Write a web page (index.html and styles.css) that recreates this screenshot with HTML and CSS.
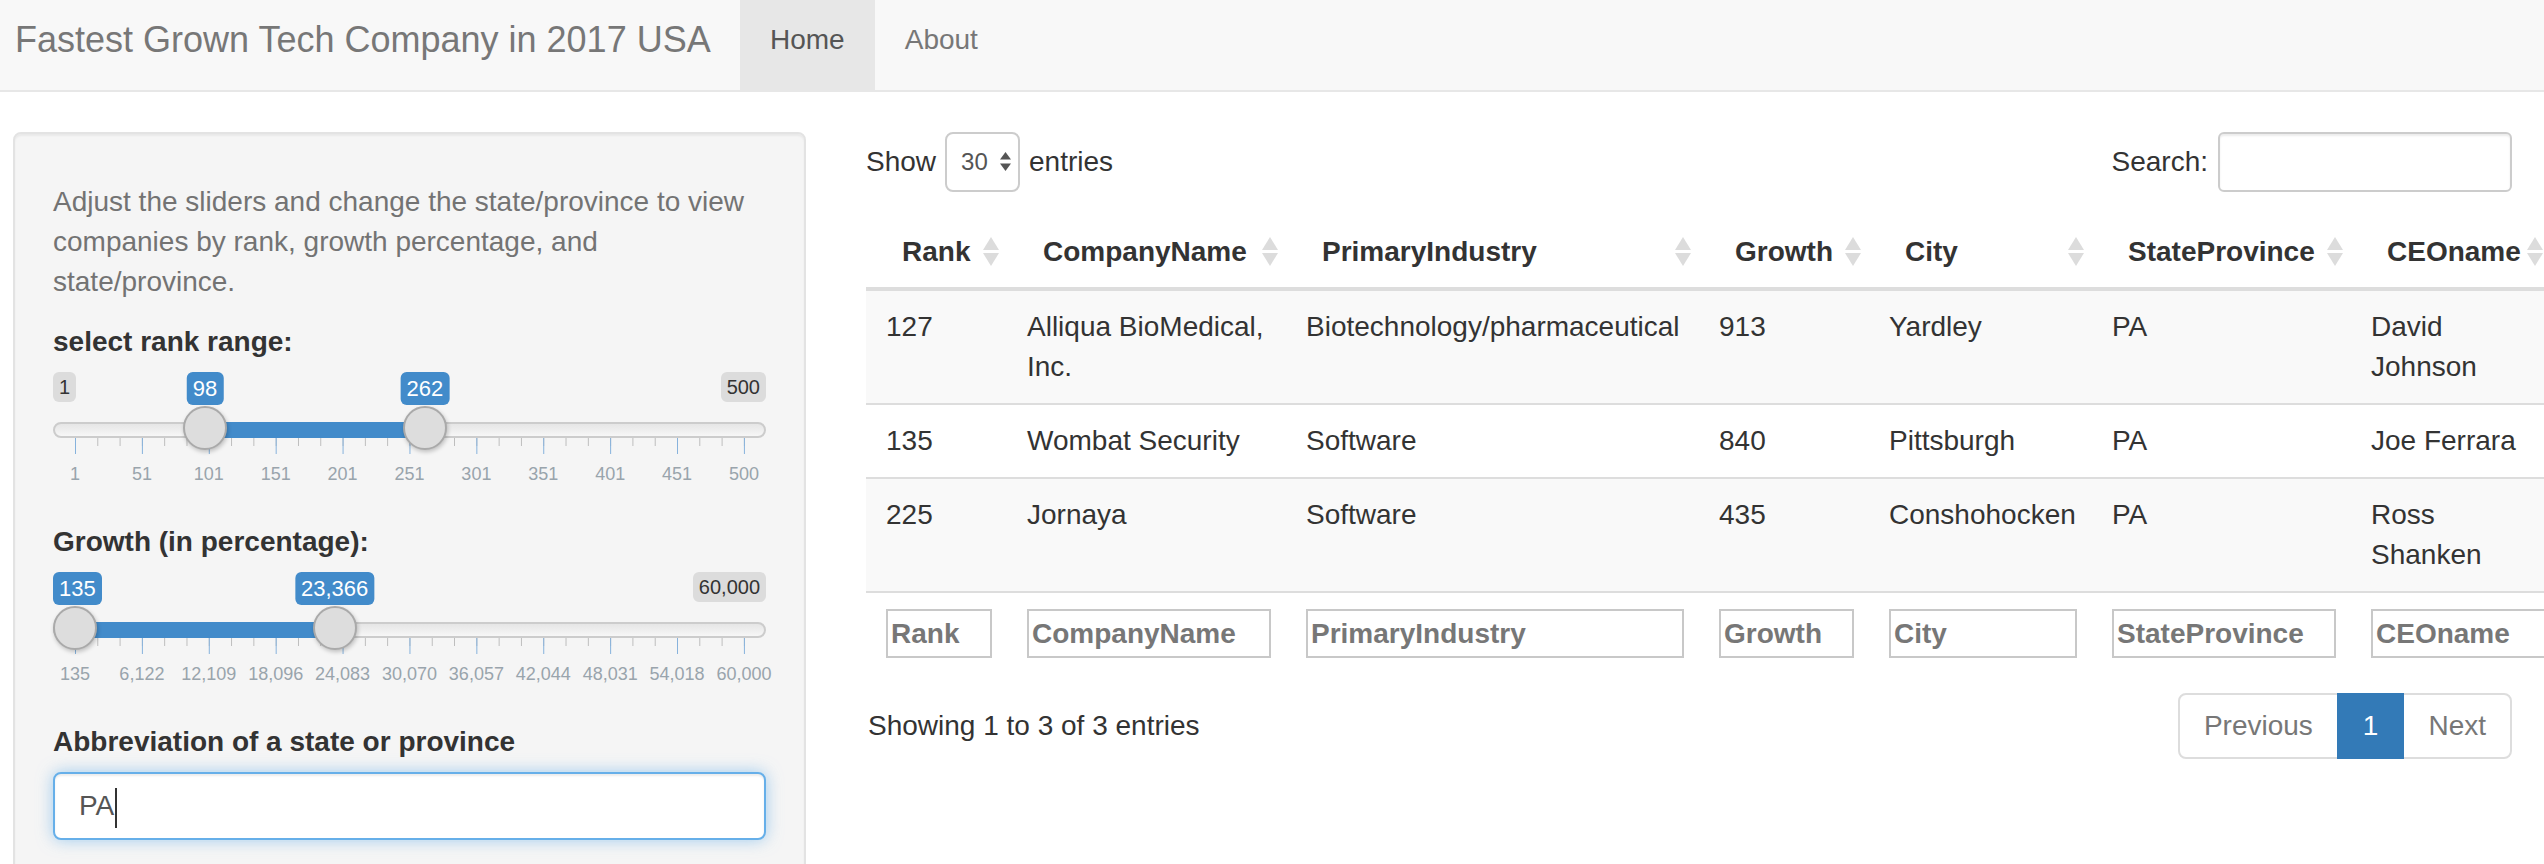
FILE: index.html
```html
<!DOCTYPE html>
<html lang="en">
<head>
<meta charset="utf-8">
<title>Fastest Grown Tech Company in 2017 USA</title>
<link rel="stylesheet" href="styles.css">
</head>
<body>
<nav class="navbar">
  <span class="brand">Fastest Grown Tech Company in 2017 USA</span>
  <ul class="nav">
    <li class="active">Home</li>
    <li>About</li>
  </ul>
</nav>

<div class="layout">
  <aside class="sidebar">
    <span class="help">Adjust the sliders and change the state/province to view<br>companies by rank, growth percentage, and<br>state/province.</span>

    <div class="form-group">
      <label class="ctl-label">select rank range:</label>
      <div class="irs">
        <span class="irs-line"></span>
        <span class="irs-bar" style="--a:0.19439;--b:0.52305"></span>
        <span class="irs-min">1</span>
        <span class="irs-max">500</span>
        <span class="irs-tag" style="--p:0.19439">98</span>
        <span class="irs-tag" style="--p:0.52305">262</span>
        <span class="irs-grid"></span>
        <span class="irs-gt" style="--p:0">1</span>
        <span class="irs-gt" style="--p:0.1">51</span>
        <span class="irs-gt" style="--p:0.2">101</span>
        <span class="irs-gt" style="--p:0.3">151</span>
        <span class="irs-gt" style="--p:0.4">201</span>
        <span class="irs-gt" style="--p:0.5">251</span>
        <span class="irs-gt" style="--p:0.6">301</span>
        <span class="irs-gt" style="--p:0.7">351</span>
        <span class="irs-gt" style="--p:0.8">401</span>
        <span class="irs-gt" style="--p:0.9">451</span>
        <span class="irs-gt" style="--p:1">500</span>
        <span class="irs-handle" style="--p:0.19439"></span>
        <span class="irs-handle" style="--p:0.52305"></span>
      </div>
    </div>

    <div class="form-group">
      <label class="ctl-label">Growth (in percentage):</label>
      <div class="irs">
        <span class="irs-line"></span>
        <span class="irs-bar" style="--a:0;--b:0.38806"></span>
        <span class="irs-max">60,000</span>
        <span class="irs-tag irs-tag-start">135</span>
        <span class="irs-tag" style="--p:0.38806">23,366</span>
        <span class="irs-grid"></span>
        <span class="irs-gt" style="--p:0">135</span>
        <span class="irs-gt" style="--p:0.1">6,122</span>
        <span class="irs-gt" style="--p:0.2">12,109</span>
        <span class="irs-gt" style="--p:0.3">18,096</span>
        <span class="irs-gt" style="--p:0.4">24,083</span>
        <span class="irs-gt" style="--p:0.5">30,070</span>
        <span class="irs-gt" style="--p:0.6">36,057</span>
        <span class="irs-gt" style="--p:0.7">42,044</span>
        <span class="irs-gt" style="--p:0.8">48,031</span>
        <span class="irs-gt" style="--p:0.9">54,018</span>
        <span class="irs-gt" style="--p:1">60,000</span>
        <span class="irs-handle" style="--p:0"></span>
        <span class="irs-handle" style="--p:0.38806"></span>
      </div>
    </div>

    <div class="form-group">
      <label class="ctl-label">Abbreviation of a state or province</label>
      <div class="text-input">PA<span class="caret"></span></div>
    </div>
  </aside>

  <main class="main">
    <div class="dt-top">
      <div class="len">
        <span>Show</span>
        <span class="select">
          <span>30</span>
          <svg class="sel-arrows" width="11" height="20" viewBox="0 0 11 20"><polygon points="5.5,0 11,7.5 0,7.5" fill="#555"/><polygon points="0,11.5 11,11.5 5.5,19" fill="#555"/></svg>
        </span>
        <span>entries</span>
      </div>
      <div class="search">
        <span>Search:</span>
        <span class="search-input"></span>
      </div>
    </div>

    <table class="dt">
      <colgroup>
        <col class="c1"><col class="c2"><col class="c3"><col class="c4"><col class="c5"><col class="c6"><col class="c7">
      </colgroup>
      <thead>
        <tr>
          <th>Rank<svg class="sort" viewBox="0 0 18 30"><polygon points="9,0 17,13 1,13"/><polygon points="1,16 17,16 9,29"/></svg></th>
          <th>CompanyName<svg class="sort" viewBox="0 0 18 30"><polygon points="9,0 17,13 1,13"/><polygon points="1,16 17,16 9,29"/></svg></th>
          <th>PrimaryIndustry<svg class="sort" viewBox="0 0 18 30"><polygon points="9,0 17,13 1,13"/><polygon points="1,16 17,16 9,29"/></svg></th>
          <th>Growth<svg class="sort" viewBox="0 0 18 30"><polygon points="9,0 17,13 1,13"/><polygon points="1,16 17,16 9,29"/></svg></th>
          <th>City<svg class="sort" viewBox="0 0 18 30"><polygon points="9,0 17,13 1,13"/><polygon points="1,16 17,16 9,29"/></svg></th>
          <th>StateProvince<svg class="sort" viewBox="0 0 18 30"><polygon points="9,0 17,13 1,13"/><polygon points="1,16 17,16 9,29"/></svg></th>
          <th>CEOname<svg class="sort" viewBox="0 0 18 30"><polygon points="9,0 17,13 1,13"/><polygon points="1,16 17,16 9,29"/></svg></th>
        </tr>
      </thead>
      <tbody>
        <tr>
          <td>127</td><td>Alliqua BioMedical, Inc.</td><td>Biotechnology/pharmaceutical</td><td>913</td><td>Yardley</td><td>PA</td><td>David Johnson</td>
        </tr>
        <tr>
          <td>135</td><td>Wombat Security</td><td>Software</td><td>840</td><td>Pittsburgh</td><td>PA</td><td>Joe Ferrara</td>
        </tr>
        <tr>
          <td>225</td><td>Jornaya</td><td>Software</td><td>435</td><td>Conshohocken</td><td>PA</td><td>Ross Shanken</td>
        </tr>
      </tbody>
      <tfoot>
        <tr>
          <td><div class="filter">Rank</div></td>
          <td><div class="filter">CompanyName</div></td>
          <td><div class="filter">PrimaryIndustry</div></td>
          <td><div class="filter">Growth</div></td>
          <td><div class="filter">City</div></td>
          <td><div class="filter">StateProvince</div></td>
          <td><div class="filter">CEOname</div></td>
        </tr>
      </tfoot>
    </table>

    <div class="dt-bottom">
      <span>Showing 1 to 3 of 3 entries</span>
      <ul class="pager">
        <li class="disabled">Previous</li>
        <li class="current">1</li>
        <li class="disabled">Next</li>
      </ul>
    </div>
  </main>
</div>
</body>
</html>
```

FILE: styles.css
```css
* { box-sizing: border-box; }

html, body {
  margin: 0;
  padding: 0;
  overflow: hidden;
}

body {
  width: 2544px;
  height: 864px;
  font-family: "Liberation Sans", Arial, "Helvetica Neue", sans-serif;
  font-size: 28px;
  line-height: 40px;
  color: #333;
  background: #fff;
}

/* ---------- navbar ---------- */
.navbar {
  display: flex;
  height: 92px;
  background: #f8f8f8;
  border-bottom: 2px solid #e7e7e7;
}

.brand {
  width: 740px;
  flex: none;
  padding: 20px 0 0 15px;
  font-size: 36px;
  line-height: 40px;
  color: #777;
  white-space: nowrap;
}

.nav {
  display: flex;
  margin: 0;
  padding: 0;
  list-style: none;
}

.nav li {
  height: 90px;
  padding: 20px 30px 0;
  color: #777;
}

.nav li.active {
  background: #e7e7e7;
  color: #555;
}

/* ---------- layout ---------- */
.layout {
  display: flex;
  align-items: flex-start;
  height: 772px;
  padding-top: 40px;
  overflow: hidden;
}

.sidebar {
  flex: none;
  width: 793px;
  margin-left: 13px;
  padding: 38px;
  background: #f5f5f5;
  border: 2px solid #e3e3e3;
  border-radius: 8px;
  box-shadow: inset 0 2px 2px rgba(0, 0, 0, 0.05);
}

.help {
  display: block;
  margin: 10px 0 20px;
  color: #737373;
}

.ctl-label {
  display: block;
  margin-bottom: 10px;
  font-weight: bold;
  color: #333;
}

.form-group {
  margin-bottom: 30px;
}

/* ---------- range slider ---------- */
.irs {
  position: relative;
  height: 120px;
}

.irs-line {
  position: absolute;
  left: 0;
  right: 0;
  top: 50px;
  height: 16px;
  border: 2px solid #ccc;
  border-radius: 32px;
  background: linear-gradient(to bottom, #ddd -50%, #fff 150%);
}

.irs-bar {
  position: absolute;
  top: 50px;
  height: 16px;
  left: calc(22px + var(--a) * 669px);
  width: calc((var(--b) - var(--a)) * 669px);
  background: #428bca;
}

.irs-handle {
  position: absolute;
  top: 34px;
  left: calc(22px + var(--p) * 669px);
  width: 44px;
  height: 44px;
  margin-left: -22px;
  border: 2px solid #aaa;
  border-radius: 50%;
  background: #ddd;
  box-shadow: 1px 2px 4px rgba(0, 0, 0, 0.22);
}

.irs-min,
.irs-max {
  position: absolute;
  top: 0;
  padding: 2px 6px;
  font-size: 20px;
  line-height: 26px;
  color: #333;
  background: rgba(0, 0, 0, 0.1);
  border-radius: 6px;
}

.irs-min { left: 0; }
.irs-max { right: 0; }

.irs-tag {
  position: absolute;
  top: 0;
  left: calc(22px + var(--p) * 669px);
  transform: translateX(-50%);
  padding: 2px 6px;
  font-size: 22px;
  line-height: 29px;
  color: #fff;
  background: #428bca;
  border-radius: 6px;
  white-space: nowrap;
}

.irs-tag-start {
  left: 0;
  transform: none;
}

.irs-grid {
  position: absolute;
  left: 22px;
  top: 66px;
  width: 671px;
  height: 16px;
  background:
    linear-gradient(to right, #86b2dc 0 1px, transparent 1px) 0 0 / 66.9px 16px repeat-x,
    linear-gradient(to right, #bcbcbc 0 1px, transparent 1px) 0 0 / 22.3px 8px repeat-x;
}

.irs-gt {
  position: absolute;
  top: 93px;
  left: calc(22px + var(--p) * 669px);
  transform: translateX(-50%);
  font-size: 18px;
  line-height: 18px;
  color: #99a4ac;
  white-space: nowrap;
}

/* ---------- text input ---------- */
.text-input {
  height: 68px;
  padding: 0 24px;
  line-height: 64px;
  color: #555;
  background: #fff;
  border: 2px solid #66afe9;
  border-radius: 8px;
  box-shadow: inset 0 2px 2px rgba(0, 0, 0, 0.075), 0 0 16px rgba(102, 175, 233, 0.6);
}

.caret {
  display: inline-block;
  width: 2px;
  height: 40px;
  margin-left: 1px;
  vertical-align: middle;
  background: #333;
}

/* ---------- main / datatable ---------- */
.main {
  flex: none;
  width: 1646px;
  margin-left: 60px;
}

.dt-top {
  display: flex;
  justify-content: space-between;
  align-items: center;
  height: 60px;
}

.len {
  display: flex;
  align-items: center;
  gap: 9px;
}

.select {
  display: flex;
  align-items: center;
  gap: 12px;
  width: 75px;
  height: 60px;
  padding-left: 14px;
  font-size: 24px;
  color: #555;
  border: 2px solid #ccc;
  border-radius: 8px;
}

.search {
  display: flex;
  align-items: center;
  gap: 10px;
}

.search-input {
  display: block;
  width: 294px;
  height: 60px;
  background: #fff;
  border: 2px solid #ccc;
  border-radius: 6px;
  box-shadow: inset 0 2px 2px rgba(0, 0, 0, 0.075);
}

.dt {
  width: 1685px;
  margin-top: 20px;
  table-layout: fixed;
  border-collapse: separate;
  border-spacing: 0;
}

.c1 { width: 141px; }
.c2 { width: 279px; }
.c3 { width: 413px; }
.c4 { width: 170px; }
.c5 { width: 223px; }
.c6 { width: 259px; }
.c7 { width: 200px; }

.dt th {
  position: relative;
  padding: 20px 40px 15px 36px;
  text-align: left;
  font-weight: bold;
  white-space: nowrap;
  border-bottom: 4px solid #ddd;
}

.sort {
  position: absolute;
  top: 25px;
  right: 7px;
  width: 18px;
  height: 30px;
  fill: #dcdcdc;
}

.dt td {
  padding: 16px 12px 16px 20px;
  vertical-align: top;
  border-top: 2px solid #ddd;
}

.dt tbody tr:first-child td { border-top: 0; }
.dt tbody tr:nth-child(odd) td { background: #f9f9f9; }
.dt tbody tr:last-child td { border-bottom: 2px solid #ddd; }

.dt tfoot td {
  padding: 16px 15px 16px 20px;
  border-top: 0;
}

.dt tfoot td:last-child {
  padding-right: 0;
}

.filter {
  height: 49px;
  padding: 0 3px;
  line-height: 45px;
  font-weight: bold;
  color: #777;
  white-space: nowrap;
  overflow: hidden;
  background: #fff;
  border: 2px solid #c8c8c8;
}

.dt-bottom {
  display: flex;
  justify-content: space-between;
  align-items: center;
  margin-top: 19px;
  padding-left: 2px;
}

.pager {
  display: flex;
  margin: 0;
  padding: 0;
  list-style: none;
}

.pager li {
  padding: 11px 24px;
  line-height: 40px;
  color: #777;
  background: #fff;
  border: 2px solid #ddd;
  margin-left: -2px;
}

.pager li:first-child {
  margin-left: 0;
  border-radius: 8px 0 0 8px;
}

.pager li:last-child {
  border-radius: 0 8px 8px 0;
}

.pager li.current {
  position: relative;
  color: #fff;
  background: #337ab7;
  border-color: #337ab7;
}
```
